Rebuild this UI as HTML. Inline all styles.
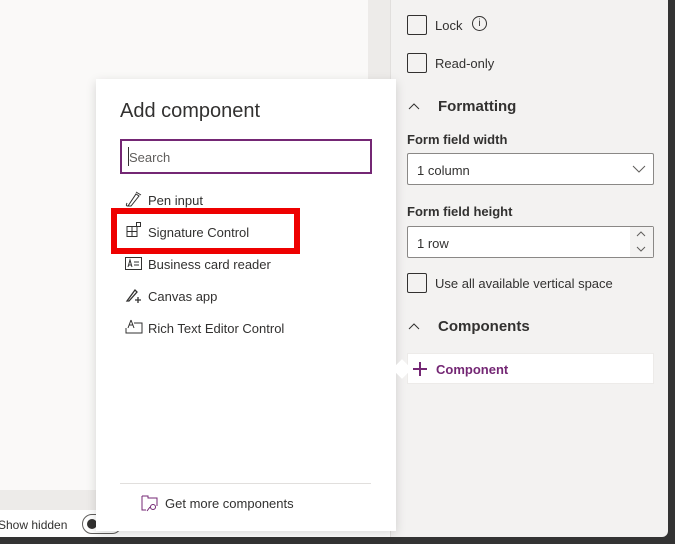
<!DOCTYPE html>
<html><head><style>
*{margin:0;padding:0;box-sizing:border-box}
body{width:675px;height:544px;overflow:hidden;background:#333;font-family:"Liberation Sans",sans-serif;color:#323130;position:relative}
.abs{position:absolute}
.cb{position:absolute;left:407px;width:20px;height:20px;border:1px solid #323130;border-radius:2px}
.t13{font-size:13px}
.sec{font-size:15px;font-weight:bold}
.field{position:absolute;left:407px;width:247px;height:32px;border:1px solid #8a8886;background:#fff;border-radius:2px;font-size:13px;padding:9px 9px}
.item{position:absolute;left:148px;font-size:13px;color:#323130}
</style></head><body>
<div class="abs" style="left:0;top:0;width:668px;height:537px;background:#f3f2f1;border-bottom-right-radius:6px"></div>
<div class="abs" style="left:0;top:0;width:368px;height:490px;background:#faf9f8"></div>
<div class="abs" style="left:368px;top:0;width:22px;height:490px;background:#edebe9"></div>
<div class="abs" style="left:390px;top:0;width:1px;height:537px;background:#e1dfdd"></div>
<div class="abs" style="left:0;top:490px;width:390px;height:20px;background:#edebe9"></div>
<div class="abs" style="left:0;top:510px;width:390px;height:27px;background:#fff"></div>
<div class="abs t13" style="left:-2px;top:518px;font-size:12px">Show hidden</div>
<div class="abs" style="left:82px;top:514px;width:40px;height:20px;border:1px solid #605e5c;border-radius:10px"><div style="position:absolute;left:4px;top:4px;width:10px;height:10px;border-radius:50%;background:#323130"></div></div>

<div class="cb" style="top:15px"></div><div class="abs t13" style="left:435px;top:18px">Lock</div>
<div class="abs" style="left:472px;top:16px;width:15px;height:15px;border:1px solid #323130;border-radius:50%;font-size:10px;text-align:center;line-height:13px">i</div>
<div class="cb" style="top:53px"></div><div class="abs t13" style="left:435px;top:56px">Read-only</div>
<svg class="abs" style="left:408px;top:102px" width="12" height="10"><path d="M1 7 L6 2 L11 7" fill="none" stroke="#323130"/></svg>
<div class="abs sec" style="left:438px;top:98px">Formatting</div>
<div class="abs t13" style="left:407px;top:132px;font-weight:bold">Form field width</div>
<div class="field" style="top:153px">1 column</div>
<svg class="abs" style="left:632px;top:164px" width="14" height="10"><path d="M1 2 L7 8 L13 2" fill="none" stroke="#605e5c"/></svg>
<div class="abs t13" style="left:407px;top:204px;font-weight:bold">Form field height</div>
<div class="field" style="top:226px">1 row</div>
<div class="abs" style="left:630px;top:227px;width:23px;height:30px;background:#f3f2f1"></div>
<svg class="abs" style="left:636px;top:230px" width="10" height="24"><path d="M1 6 L5 2 L9 6 M1 17 L5 21 L9 17" fill="none" stroke="#605e5c"/></svg>
<div class="cb" style="top:273px"></div><div class="abs t13" style="left:435px;top:276px">Use all available vertical space</div>
<svg class="abs" style="left:408px;top:322px" width="12" height="10"><path d="M1 7 L6 2 L11 7" fill="none" stroke="#323130"/></svg>
<div class="abs sec" style="left:438px;top:318px">Components</div>
<div class="abs" style="left:407px;top:353px;width:247px;height:31px;background:#fff;border:1px solid #edebe9"></div>
<svg class="abs" style="left:411px;top:360px" width="18" height="18"><path d="M9 2 V16 M2 9 H16" stroke="#742774" stroke-width="2"/></svg>
<div class="abs t13" style="left:436px;top:362px;font-weight:bold;color:#742774">Component</div>

<div class="abs" style="left:96px;top:79px;width:300px;height:452px;background:#fff;box-shadow:0 3px 10px rgba(0,0,0,.15)"></div>
<div class="abs" style="left:395px;top:362px;width:14px;height:14px;background:#fff;transform:rotate(45deg)"></div>
<div class="abs" style="left:120px;top:100px;font-size:20px">Add component</div>
<div class="abs" style="left:120px;top:139px;width:252px;height:35px;border:2px solid #742774;font-size:13px;color:#605e5c;padding:9px 7px">Search</div>
<div class="abs" style="left:128px;top:147px;width:1px;height:19px;background:#323130"></div>
<svg class="abs" style="left:125px;top:191px" width="18" height="16" fill="none" stroke="#323130"><path d="M3 15 L11 3 L14 5 L6 15 Z M11 1 L16 4 M2 12 C1 14 1 15 3 15"/></svg>
<div class="item" style="top:193px">Pen input</div>
<svg class="abs" style="left:126px;top:222px" width="16" height="16" fill="none" stroke="#323130"><rect x="1" y="4.5" width="5" height="5"/><rect x="1" y="9.5" width="5" height="5"/><rect x="6" y="9.5" width="5" height="5"/><rect x="6" y="4.5" width="5" height="5"/><rect x="10.5" y="0.5" width="4" height="4"/></svg>
<div class="item" style="top:225px">Signature Control</div>
<div class="abs" style="left:111px;top:208px;width:189px;height:46px;border:6px solid #ee0000"></div>
<svg class="abs" style="left:125px;top:257px" width="18" height="14" fill="none" stroke="#323130"><rect x="0.5" y="0.5" width="16" height="12"/><path d="M3 10 L5 3 L7 10 M4 8 H6 M9 5 H14 M9 8 H14"/></svg>
<div class="item" style="top:257px">Business card reader</div>
<svg class="abs" style="left:125px;top:287px" width="18" height="16" fill="none" stroke="#323130"><path d="M2 14 L10 3 L12 5 L4 14 Z M13 10 V16 M10 13 H16" stroke-width="1.3"/></svg>
<div class="item" style="top:289px">Canvas app</div>
<svg class="abs" style="left:125px;top:319px" width="18" height="16" fill="none" stroke="#323130"><path d="M6 1 L3 9 M6 1 L9 9 M4 6 H8 M9 4 H17 V14 H1 V9"/></svg>
<div class="item" style="top:321px">Rich Text Editor Control</div>
<div class="abs" style="left:120px;top:483px;width:251px;height:1px;background:#e1dfdd"></div>
<svg class="abs" style="left:141px;top:495px" width="18" height="17" fill="none" stroke="#742774"><path d="M1 1 H7 V3 H16 V11 M1 1 V15 H5 M9 12 L6 16"/><circle cx="12" cy="12" r="2.5"/></svg>
<div class="abs t13" style="left:165px;top:496px">Get more components</div>
</body></html>
